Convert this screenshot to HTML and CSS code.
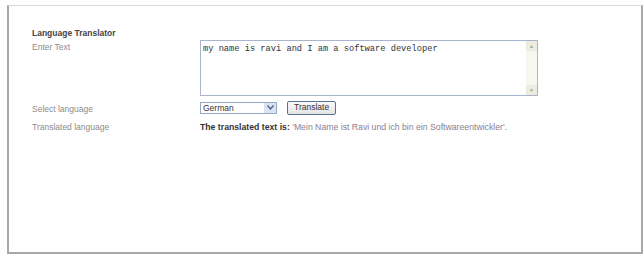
FILE: index.html
```html
<!DOCTYPE html>
<html>
<head>
<meta charset="utf-8">
<link rel="stylesheet" href="styles.css">
</head>
<body>
<div class="frame">
  <div class="title">Language Translator</div>
  <div class="form">
    <div class="label">Enter Text</div>
    <div class="field">
      <div class="textarea">
        <div class="ta-text">my name is ravi and I am a software developer</div>
        <div class="scroll">
          <span class="sbtn">&#9650;</span>
          <span class="sbtn">&#9660;</span>
        </div>
      </div>
    </div>
    <div class="label lbl-select">Select language</div>
    <div class="field row">
      <div class="select"><span class="sel-text">German</span><span class="sel-arrow"><svg width="7" height="5" viewBox="0 0 7 5"><path d="M0.5 0.5 L3.5 4 L6.5 0.5" fill="none" stroke="#4b5e8c" stroke-width="1.3"/></svg></span></div>
      <button class="btn">Translate</button>
    </div>
    <div class="label">Translated language</div>
    <div class="result"><b>The translated text is:</b> <span class="out">'Mein Name ist Ravi und ich bin ein Softwareentwickler'.</span></div>
  </div>
</div>
</body>
</html>
```
FILE: styles.css
```css
html, body { margin: 0; padding: 0; background: #fff; }
body { font-family: "Liberation Sans", Arial, sans-serif; font-size: 8.5px; color: #8c8c8c; }
.frame {
  margin: 5px 1px 0 7px;
  height: 249px;
  border-top: 1px solid #d4dad4;
  border-left: 2px solid #a8a8a8;
  border-right: 2px solid #a8a8a8;
  border-bottom: 2px solid #a8a8a8;
  padding: 21px 0 0 23px;
  box-sizing: border-box;
}
.title { font-weight: bold; color: #444; height: 12px; line-height: 12px; }
.form { display: grid; grid-template-columns: 168px 1fr; row-gap: 4px; }
.label { line-height: 12px; padding-top: 2px; }
.lbl-select { padding-top: 3px; }
.field { display: flex; }
.textarea {
  width: 338px; height: 56px;
  border: 1px solid #aab4cc;
  display: flex;
  box-sizing: border-box;
  margin-top: 1px;
}
.ta-text { flex: 1; font-family: "Liberation Mono", monospace; font-size: 8.7px; color: #333; padding: 3px 2px; }
.scroll { width: 11px; background: #f7f7ef; display: flex; flex-direction: column; justify-content: space-between; }
.sbtn { height: 10px; font-size: 5px; line-height: 10px; text-align: center; color: #9aa; background: #ececdf; }
.row { align-items: center; gap: 10px; }
.select {
  width: 77px; height: 12px; border: 1px solid #97a6c2; box-sizing: border-box;
  display: flex; align-items: center; background: #fff;
}
.sel-text { flex: 1; color: #333; padding-left: 2px; line-height: 10px; }
.sel-arrow { width: 12px; height: 10px; background: #dbe3f3; display: flex; align-items: center; justify-content: center; }
.btn {
  font-family: inherit; font-size: 8.5px; color: #333;
  height: 14px; padding: 0 6px; border: 1px solid #5a6f96; border-radius: 2px;
  background: linear-gradient(#fafafa, #e4e4e4);
  line-height: 11px;
}
.result { line-height: 12px; padding-top: 2px; color: #333; font-size: 8.7px; }
.result b { color: #333; }
.out { color: #8c8090; }
```
